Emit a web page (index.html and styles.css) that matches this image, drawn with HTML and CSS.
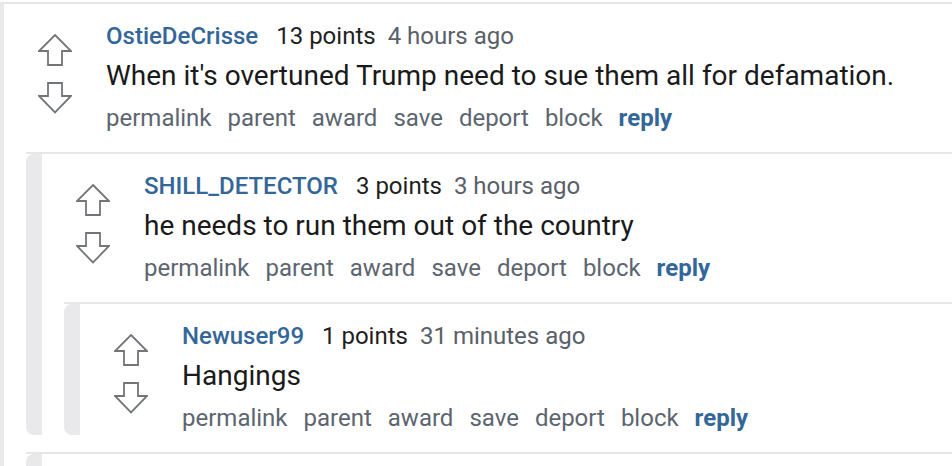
FILE: index.html
```html
<!DOCTYPE html>
<html>
<head>
<meta charset="utf-8">
<title>Comments</title>
<link rel="stylesheet" href="styles.css">
</head>
<body>
<div class="thread">
  <div class="comment">
    <div class="comment-inner">
      <div class="entry">
        <div class="votes">
          <svg class="arrow" width="34" height="32" viewBox="0 0 34 32"><path d="M17 1 L33 17 L24 17 L24 31 L10 31 L10 17 L1 17 Z"/></svg>
          <svg class="arrow down" width="34" height="32" viewBox="0 0 34 32"><path d="M10 1 L24 1 L24 14 L33 14 L17 30.5 L1 14 L10 14 Z"/></svg>
        </div>
        <div class="main">
          <div class="meta"><a class="user" href="#">OstieDeCrisse</a><span class="points">13 points</span><span class="time">4 hours ago</span></div>
          <div class="body">When it's overtuned Trump need to sue them all for defamation.</div>
          <div class="actions"><a href="#">permalink</a><a href="#">parent</a><a href="#">award</a><a href="#">save</a><a href="#">deport</a><a href="#">block</a><a href="#" class="reply">reply</a></div>
        </div>
      </div>
      <div class="children">
        <div class="comment">
          <div class="comment-inner">
            <div class="entry">
              <div class="votes">
                <svg class="arrow" width="34" height="32" viewBox="0 0 34 32"><path d="M17 1 L33 17 L24 17 L24 31 L10 31 L10 17 L1 17 Z"/></svg>
                <svg class="arrow down" width="34" height="32" viewBox="0 0 34 32"><path d="M10 1 L24 1 L24 14 L33 14 L17 30.5 L1 14 L10 14 Z"/></svg>
              </div>
              <div class="main">
                <div class="meta"><a class="user" href="#">SHILL_DETECTOR</a><span class="points">3 points</span><span class="time">3 hours ago</span></div>
                <div class="body">he needs to run them out of the country</div>
                <div class="actions"><a href="#">permalink</a><a href="#">parent</a><a href="#">award</a><a href="#">save</a><a href="#">deport</a><a href="#">block</a><a href="#" class="reply">reply</a></div>
              </div>
            </div>
            <div class="children">
              <div class="comment">
                <div class="comment-inner">
                  <div class="entry">
                    <div class="votes">
                      <svg class="arrow" width="34" height="32" viewBox="0 0 34 32"><path d="M17 1 L33 17 L24 17 L24 31 L10 31 L10 17 L1 17 Z"/></svg>
                      <svg class="arrow down" width="34" height="32" viewBox="0 0 34 32"><path d="M10 1 L24 1 L24 14 L33 14 L17 30.5 L1 14 L10 14 Z"/></svg>
                    </div>
                    <div class="main">
                      <div class="meta"><a class="user" href="#">Newuser99</a><span class="points">1 points</span><span class="time">31 minutes ago</span></div>
                      <div class="body">Hangings</div>
                      <div class="actions"><a href="#">permalink</a><a href="#">parent</a><a href="#">award</a><a href="#">save</a><a href="#">deport</a><a href="#">block</a><a href="#" class="reply">reply</a></div>
                    </div>
                  </div>
                </div>
              </div>
            </div>
          </div>
        </div>
        <div class="comment">
          <div class="comment-inner placeholder"></div>
        </div>
      </div>
    </div>
  </div>
</div>
</body>
</html>
```
FILE: styles.css
```css
html, body {
  margin: 0;
  padding: 0;
  background: #ffffff;
  overflow: hidden;
}
body {
  font-family: Roboto, "Liberation Sans", sans-serif;
  color: #1a1a1b;
}
a { text-decoration: none; }

.thread {
  margin: 2px 0 0 -12px;
}
.comment {
  border-top: 2px solid #e7e7e7;
}
.children .comment {
  margin: 17px 0 0 22px;
}
.comment-inner {
  border-left: 16px solid #e9e9eb;
  border-radius: 8px 0 0 8px;
}
.placeholder {
  min-height: 12px;
  border-radius: 8px 0 0 0;
}

.entry {
  display: flex;
  padding: 0 0 2px 34px;
}
.votes {
  display: flex;
  flex-direction: column;
  padding-top: 30px;
  width: 34px;
  flex: none;
}
.arrow {
  display: block;
  fill: none;
  stroke: #737679;
  stroke-width: 1.8;
  stroke-linejoin: miter;
}
.arrow.down {
  margin-top: 16px;
}
.main {
  margin-left: 34px;
  padding-top: 17px;
  display: flex;
  flex-direction: column;
}
.meta {
  display: flex;
  font-size: 24px;
  line-height: 30px;
  white-space: nowrap;
}
.user {
  color: #336699;
  font-weight: 500;
  margin-right: 18px;
}
.points {
  color: #1f1f1f;
  margin-right: 12px;
}
.time {
  color: #596069;
}
.body {
  margin-top: 10px;
  font-size: 28px;
  line-height: 30px;
  color: #1a1a1b;
  white-space: nowrap;
}
.actions {
  margin-top: 12px;
  display: flex;
  gap: 16px;
  font-size: 24px;
  line-height: 30px;
  white-space: nowrap;
}
.actions a {
  color: #5c6570;
}
.actions a.reply {
  color: #336699;
  font-weight: 700;
}
```
